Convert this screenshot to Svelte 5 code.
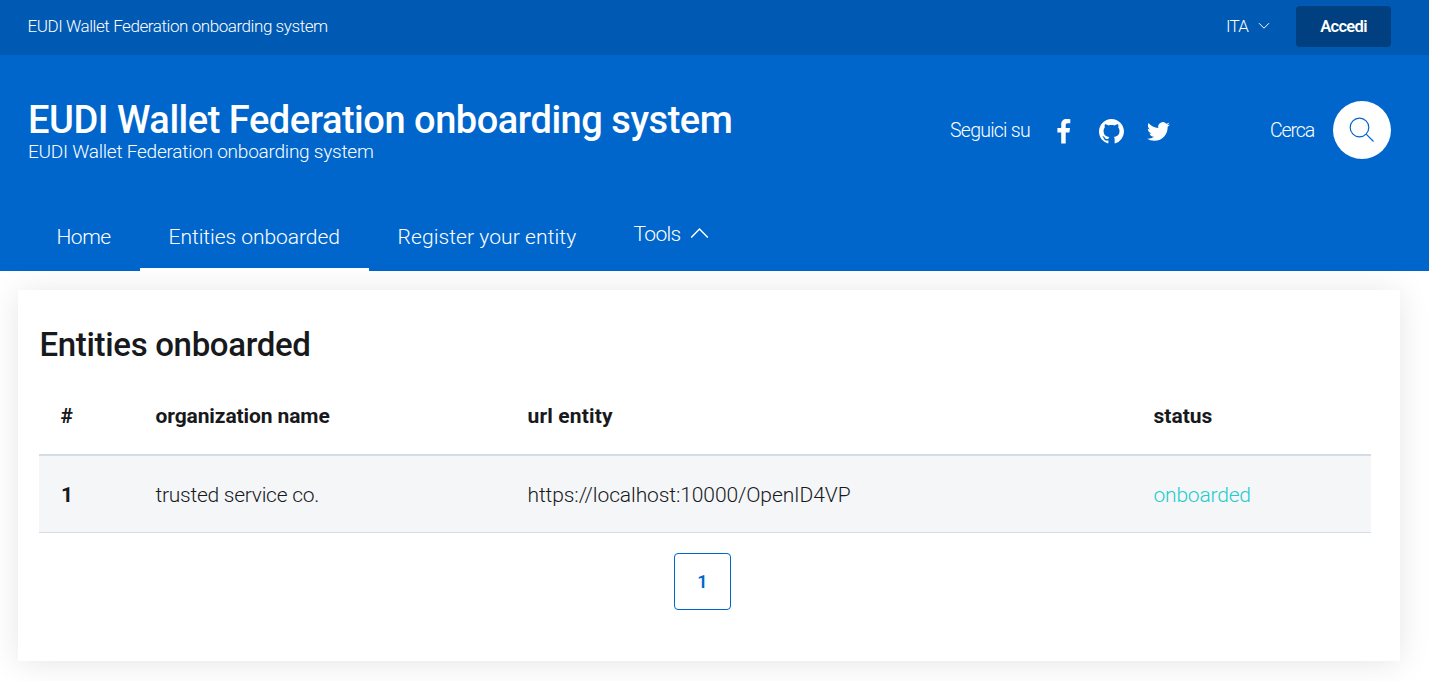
<script>
  const nav = [
    { label: 'Home', cls: 'home' },
    { label: 'Entities onboarded', cls: 'entities', active: true },
    { label: 'Register your entity', cls: 'register' }
  ];
  const rows = [
    { id: 1, name: 'trusted service co.', url: 'https://localhost:10000/OpenID4VP', status: 'onboarded' }
  ];
</script>

<header>
  <div class="slim">
    <span class="brand">EUDI Wallet Federation onboarding system</span>
    <div class="slim-right">
      <button class="lang"><span>ITA</span>
        <svg width="12" height="8" viewBox="0 0 12 8"><path d="M1 1.2 6 6.2 11 1.2" /></svg>
      </button>
      <button class="login"><span>Accedi</span></button>
    </div>
  </div>
  <div class="center">
    <div class="titles">
      <h1>EUDI Wallet Federation onboarding system</h1>
      <p>EUDI Wallet Federation onboarding system</p>
    </div>
    <div class="social">
      <span class="follow">Seguici su</span>
      <svg class="fb" width="14" height="25" viewBox="0 0 14 25"><path d="M4.2 24.5V13.4H.4V9h3.800V5.500C4.200 2 6.300.1 9.500.1c1.500 0 2.900.1 3.800.2v4H10.900C9.100 4.300 8.700 5.100 8.700 6.300V9h4.300l-.6 4.400H8.700v11.100z" /></svg>
      <svg class="gh" width="25" height="25" viewBox="0 0 16 16"><path d="M8 0C3.580 0 0 3.580 0 8c0 3.540 2.290 6.530 5.470 7.590.4.070.55-.17.55-.38 0-.19-.01-.82-.01-1.490-2.010.37-2.530-.49-2.690-.94-.09-.23-.48-.94-.82-1.130-.28-.15-.68-.52-.01-.53.63-.01 1.080.58 1.230.82.72 1.210 1.870.87 2.330.66.07-.52.28-.87.51-1.070-1.780-.2-3.640-.89-3.640-3.950 0-.87.31-1.590.82-2.150-.08-.2-.36-1.020.08-2.120 0 0 .67-.21 2.200.82.64-.18 1.320-.27 2-.27s1.360.09 2 .27c1.530-1.040 2.200-.82 2.200-.82.44 1.100.16 1.920.08 2.120.51.56.82 1.270.82 2.150 0 3.070-1.870 3.750-3.650 3.950.29.25.54.73.54 1.480 0 1.070-.01 1.930-.01 2.200 0 .21.15.46.55.38A8.010 8.010 0 0 0 16 8c0-4.420-3.580-8-8-8z" /></svg>
      <svg class="tw" width="23" height="23" viewBox="0 0 24 24"><path d="M23.950 4.570a10 10 0 0 1-2.820.77 4.960 4.960 0 0 0 2.160-2.720c-.95.55-2 .95-3.130 1.180a4.920 4.920 0 0 0-8.380 4.480C7.690 8.100 4.070 6.130 1.640 3.160a4.820 4.820 0 0 0-.67 2.480c0 1.710.87 3.210 2.190 4.100a4.900 4.900 0 0 1-2.230-.62v.06a4.920 4.920 0 0 0 3.950 4.830 5 5 0 0 1-2.210.08 4.940 4.940 0 0 0 4.600 3.420A9.870 9.870 0 0 1 0 19.540a14 14 0 0 0 7.550 2.210c9.050 0 14-7.500 14-13.980 0-.21 0-.42-.02-.63a9.940 9.940 0 0 0 2.420-2.570z" /></svg>
    </div>
    <div class="search">
      <span>Cerca</span>
      <button aria-label="Cerca"><svg width="26" height="26" viewBox="0 0 26 26"><circle cx="10.500" cy="10.500" r="9.300" /><path d="m17.200 17.200 7.300 7.300" /></svg></button>
    </div>
  </div>
  <nav>
    {#each nav as item}
      <a href="#top" class={item.cls} class:active={item.active}>{item.label}</a>
    {/each}
    <a href="#top" class="tools"><span>Tools</span>
      <svg width="19" height="12" viewBox="0 0 19 12"><path d="M1.200 10.500 9.500 2l8.300 8.500" /></svg>
    </a>
  </nav>
</header>

<main>
  <h2>Entities onboarded</h2>
  <table>
    <thead>
      <tr><th class="c1">#</th><th class="c2">organization name</th><th class="c3">url entity</th><th class="c4">status</th></tr>
    </thead>
    <tbody>
      {#each rows as row}
        <tr><th class="id">{row.id}</th><td class="name">{row.name}</td><td class="url">{row.url}</td><td class="status">{row.status}</td></tr>
      {/each}
    </tbody>
  </table>
  <div class="pager"><a href="#top" aria-current="page">1</a></div>
</main>

<style>
  :global(body) { margin: 0; background: #fff; overflow: hidden; }
  :global(#app) { min-height: 100vh; font-family: Roboto, "Open Sans", sans-serif; font-weight: 300; color: #17191c; }
  a { color: inherit; text-decoration: none; }
  button { font: inherit; border: 0; padding: 0; color: inherit; }
  span { white-space: nowrap; }
  svg { display: block; flex: none; }
  header { height: 271px; background: #06c; color: #fff; }
  .slim { box-sizing: border-box; height: 55px; padding: 6px 38px 8px 27.500px; background: #0059b3; display: flex; justify-content: space-between; align-items: center; font-size: 17px; }
  .brand { letter-spacing: -.43px; padding-bottom: 2px; }
  .slim-right { display: flex; align-items: center; }
  .lang { display: flex; align-items: center; background: none; gap: 9.500px; margin-right: 26.500px; letter-spacing: -.8px; }
  .lang span { padding-bottom: 2px; display: block; }
  .lang svg { position: relative; top: -1px; }
  .lang svg, .tools svg { fill: none; stroke: #fff; }
  .login { width: 95px; height: 41px; border-radius: 4px; background: #004080; font-weight: 600; font-size: 16.500px; letter-spacing: -.7px; }
  .center { box-sizing: border-box; height: 150px; padding: 0 38px 0 28px; display: flex; align-items: center; }
  .titles { width: 922px; padding-top: 3px; }
  h1, h2, p { margin: 0; }
  h1 { font-size: 38px; line-height: 40px; font-weight: 500; letter-spacing: -.47px; }
  p { font-size: 19px; line-height: 23px; font-weight: 300; letter-spacing: -.23px; }
  .social { display: flex; align-items: center; width: 320px; font-size: 19.500px; letter-spacing: -.75px; }
  .social svg { fill: #fff; position: relative; top: 1px; }
  .follow { width: 106.500px; }
  .gh { margin-left: 28px; }
  .tw { margin-left: 23.500px; }
  .search { flex: 1; display: flex; align-items: center; justify-content: space-between; font-size: 19.500px; letter-spacing: -1.100px; }
  .search button { width: 58px; height: 58px; padding-right: 1px; border-radius: 50%; background: #fff; display: grid; place-items: center; }
  .search svg { fill: none; stroke: #06c; stroke-width: 1.200; }
  nav { height: 66px; padding-left: 28px; display: flex; font-size: 21px; }
  nav a { box-sizing: border-box; height: 66px; padding: 19px 0 0 28.500px; line-height: 26px; border-bottom: 3px solid transparent; white-space: nowrap; }
  .home { width: 112px; letter-spacing: -.5px; }
  .entities { width: 229px; letter-spacing: -.04px; }
  .register { width: 236px; letter-spacing: .09px; }
  nav .active { border-bottom-color: #fff; }
  nav .tools { display: flex; gap: 10px; padding-top: 16px; letter-spacing: -.7px; }
  .tools svg { margin-top: 6px; stroke-width: 1.500; }
  main { box-sizing: border-box; width: 1382px; height: 371px; margin: 19px 0 0 18px; padding: 33px 29px 0 21px; background: #fff; box-shadow: 0 2px 30px rgba(0, 0, 0, .1); }
  h2 { padding-left: .5px; font-size: 33px; line-height: 44px; font-weight: 500; letter-spacing: -.33px; }
  table { width: 100%; table-layout: fixed; border-collapse: separate; border-spacing: 0; margin-top: 10px; font-size: 21px; line-height: 26px; }
  th, td { box-sizing: border-box; padding: 0 0 0 21.500px; text-align: left; }
  th { font-weight: 700; }
  td { font-weight: 300; }
  thead th { height: 79px; border-bottom: 2px solid #d6dce3; }
  tbody th, tbody td { height: 77px; padding-top: 1px; background: #f5f6f8; border-bottom: 1px solid #d6dce3; }
  tbody .id { padding-left: 22px; }
  .c1 { width: 95px; }
  .c2 { width: 372px; letter-spacing: -.1px; }
  .c3 { width: 626px; letter-spacing: .15px; }
  .name { letter-spacing: -.26px; }
  .url { letter-spacing: -.1px; }
  .status { color: #2cc; letter-spacing: -.2px; }
  .pager { display: flex; margin: 20px 0 0 635px; }
  .pager a { box-sizing: border-box; width: 57px; height: 57px; border: 1px solid #06c; border-radius: 4px; display: grid; place-items: center; color: #06c; font-size: 18px; font-weight: 600; }
</style>
